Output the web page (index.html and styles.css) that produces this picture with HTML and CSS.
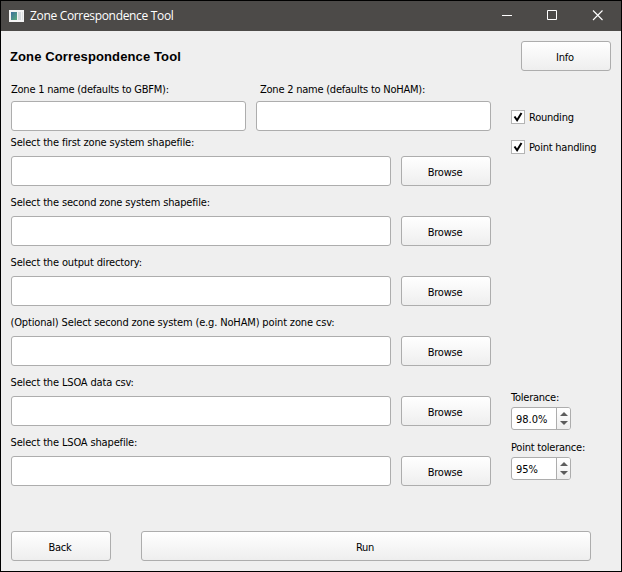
FILE: index.html
```html
<!DOCTYPE html>
<html lang="en">
<head>
<meta charset="utf-8">
<title>Zone Correspondence Tool</title>
<link rel="stylesheet" href="styles.css">
</head>
<body>
<div class="window">
  <header class="titlebar">
    <svg class="app-icon" width="15" height="12" viewBox="0 0 15 12">
      <defs><linearGradient id="pane" x1="0" y1="0" x2="1" y2="1"><stop offset="0" stop-color="#3b6f9c"/><stop offset="1" stop-color="#5cab7c"/></linearGradient></defs>
      <rect width="15" height="12" fill="#f4f4f4"/>
      <rect x="2" y="2" width="6" height="8" fill="url(#pane)"/>
      <rect x="9" y="2" width="3" height="8" fill="#d5dadd"/>
      <rect x="13" y="2" width="1" height="8" fill="#dfe2e3"/>
    </svg>
    <span class="title">Zone Correspondence Tool</span>
    <svg class="controls" width="102" height="12" viewBox="0 0 102 12" fill="none" stroke="#fff">
      <path d="M0 5.500h10M45.500.5h9v9h-9z"/>
      <path d="M91 .5l9.500 9.500M100.500.5L91 10" stroke-width="1.100"/>
    </svg>
  </header>
  <div class="heading-row">
    <h1>Zone Correspondence Tool</h1>
    <button class="info">Info</button>
  </div>
  <main class="body">
    <form class="fields">
      <div class="names">
        <label>Zone 1 name (defaults to GBFM):<input type="text"></label>
        <label class="second">Zone 2 name (defaults to NoHAM):<input type="text"></label>
      </div>
      <div class="file"><label>Select the first zone system shapefile:</label><input type="text"><button type="button">Browse</button></div>
      <div class="file"><label>Select the second zone system shapefile:</label><input type="text"><button type="button">Browse</button></div>
      <div class="file"><label>Select the output directory:</label><input type="text"><button type="button">Browse</button></div>
      <div class="file"><label>(Optional) Select second zone system (e.g. NoHAM) point zone csv:</label><input type="text"><button type="button">Browse</button></div>
      <div class="file"><label>Select the LSOA data csv:</label><input type="text"><button type="button">Browse</button></div>
      <div class="file"><label>Select the LSOA shapefile:</label><input type="text"><button type="button">Browse</button></div>
    </form>
    <aside class="options">
      <div class="check"><span class="box"><svg width="12" height="12" viewBox="0 0 12 12"><path d="M2.500 5.500l2.600 3.700L9.500 2" fill="none" stroke="#000" stroke-width="2"/></svg></span>Rounding</div>
      <div class="check"><span class="box"><svg width="12" height="12" viewBox="0 0 12 12"><path d="M2.500 5.500l2.600 3.700L9.500 2" fill="none" stroke="#000" stroke-width="2"/></svg></span>Point handling</div>
      <div class="tolerances">
        <div class="tolerance">Tolerance:<div class="spin"><span class="value">98.0%</span><span class="steps"><svg width="8" height="13" viewBox="0 0 8 13" fill="#5c5c5c"><path d="M0 4L4 0l4 4zM0 9h8l-4 4z"/></svg></span></div></div>
        <div class="tolerance">Point tolerance:<div class="spin"><span class="value">95%</span><span class="steps"><svg width="8" height="13" viewBox="0 0 8 13" fill="#5c5c5c"><path d="M0 4L4 0l4 4zM0 9h8l-4 4z"/></svg></span></div></div>
      </div>
    </aside>
  </main>
  <footer class="actions"><button class="back">Back</button><button class="run">Run</button></footer>
</div>
</body>
</html>
```
FILE: styles.css
```css
* { box-sizing: border-box; }
body { margin: 0; }
.window {
  width: 622px; height: 572px;
  display: flex; flex-direction: column;
  border: 1px solid #000;
  background: #efefef; color: #000;
  font: 11px/14px "DejaVu Sans Condensed", "DejaVu Sans", sans-serif;
  font-stretch: condensed;
  letter-spacing: -0.23px;
}
.titlebar {
  height: 30px; flex: none;
  display: flex; align-items: center;
  padding: 0 17px 0 8px;
  background: #4c4a48; color: #fff;
}
.app-icon { margin-top: -1px; }
.title { margin-left: 6px; font: 12px/16px "Open Sans", sans-serif; letter-spacing: -0.33px; }
.controls { margin-left: auto; }
.heading-row { display: flex; justify-content: space-between; height: 52px; flex: none; padding: 10px 10px 0 9px; }
h1 { margin: 0; font: bold 13px/31px "Liberation Sans", Arial, sans-serif; letter-spacing: 0.12px; }
button, input {
  height: 30px; margin: 0; padding: 0;
  border: 1px solid #adadad; border-radius: 3px;
  font: inherit; letter-spacing: inherit; color: #000;
}
button { background: linear-gradient(#fff, #eee); padding: 3px 2px 0 0; }
input { background: #fff; display: block; }
.info { width: 90px; }
.body { display: flex; gap: 20px; padding-left: 10px; height: 447px; flex: none; }
.fields { width: 480px; }
.names { display: flex; gap: 10px; height: 53px; }
.names label { width: 235px; white-space: nowrap; }
.names input { width: 235px; margin-top: 4px; }
.second { text-indent: 4px; }
.file {
  display: grid; grid-template: 20px 30px / 380px 90px;
  column-gap: 10px; height: 60px;
}
.file label { grid-column: 1 / 3; white-space: nowrap; letter-spacing: -0.15px; margin-left: -0.5px; }
.options { display: flex; flex-direction: column; }
.check { display: flex; align-items: center; gap: 4px; height: 30px; white-space: nowrap; }
.check:first-child { margin-top: 20px; }
.box { display: flex; width: 14px; height: 14px; margin-top: -2px; background: #fff; border: 1px solid #b4b4b4; }
.tolerances { margin-top: 228px; }
.tolerance { height: 50px; white-space: nowrap; }
.spin {
  display: flex; width: 60px; height: 23px; margin-top: 2px;
  border: 1px solid #adadad; border-radius: 3px; overflow: hidden; background: #fff;
}
.value { flex: 1; padding-left: 4px; line-height: 23px; letter-spacing: 0; }
.steps {
  width: 14px; display: flex; align-items: center; justify-content: center;
  border-left: 1px solid #adadad; background: linear-gradient(#fff, #eee);
}
.actions { display: flex; gap: 30px; padding: 1px 0 0 10px; }
.back { width: 100px; }
.run { width: 450px; }
```
